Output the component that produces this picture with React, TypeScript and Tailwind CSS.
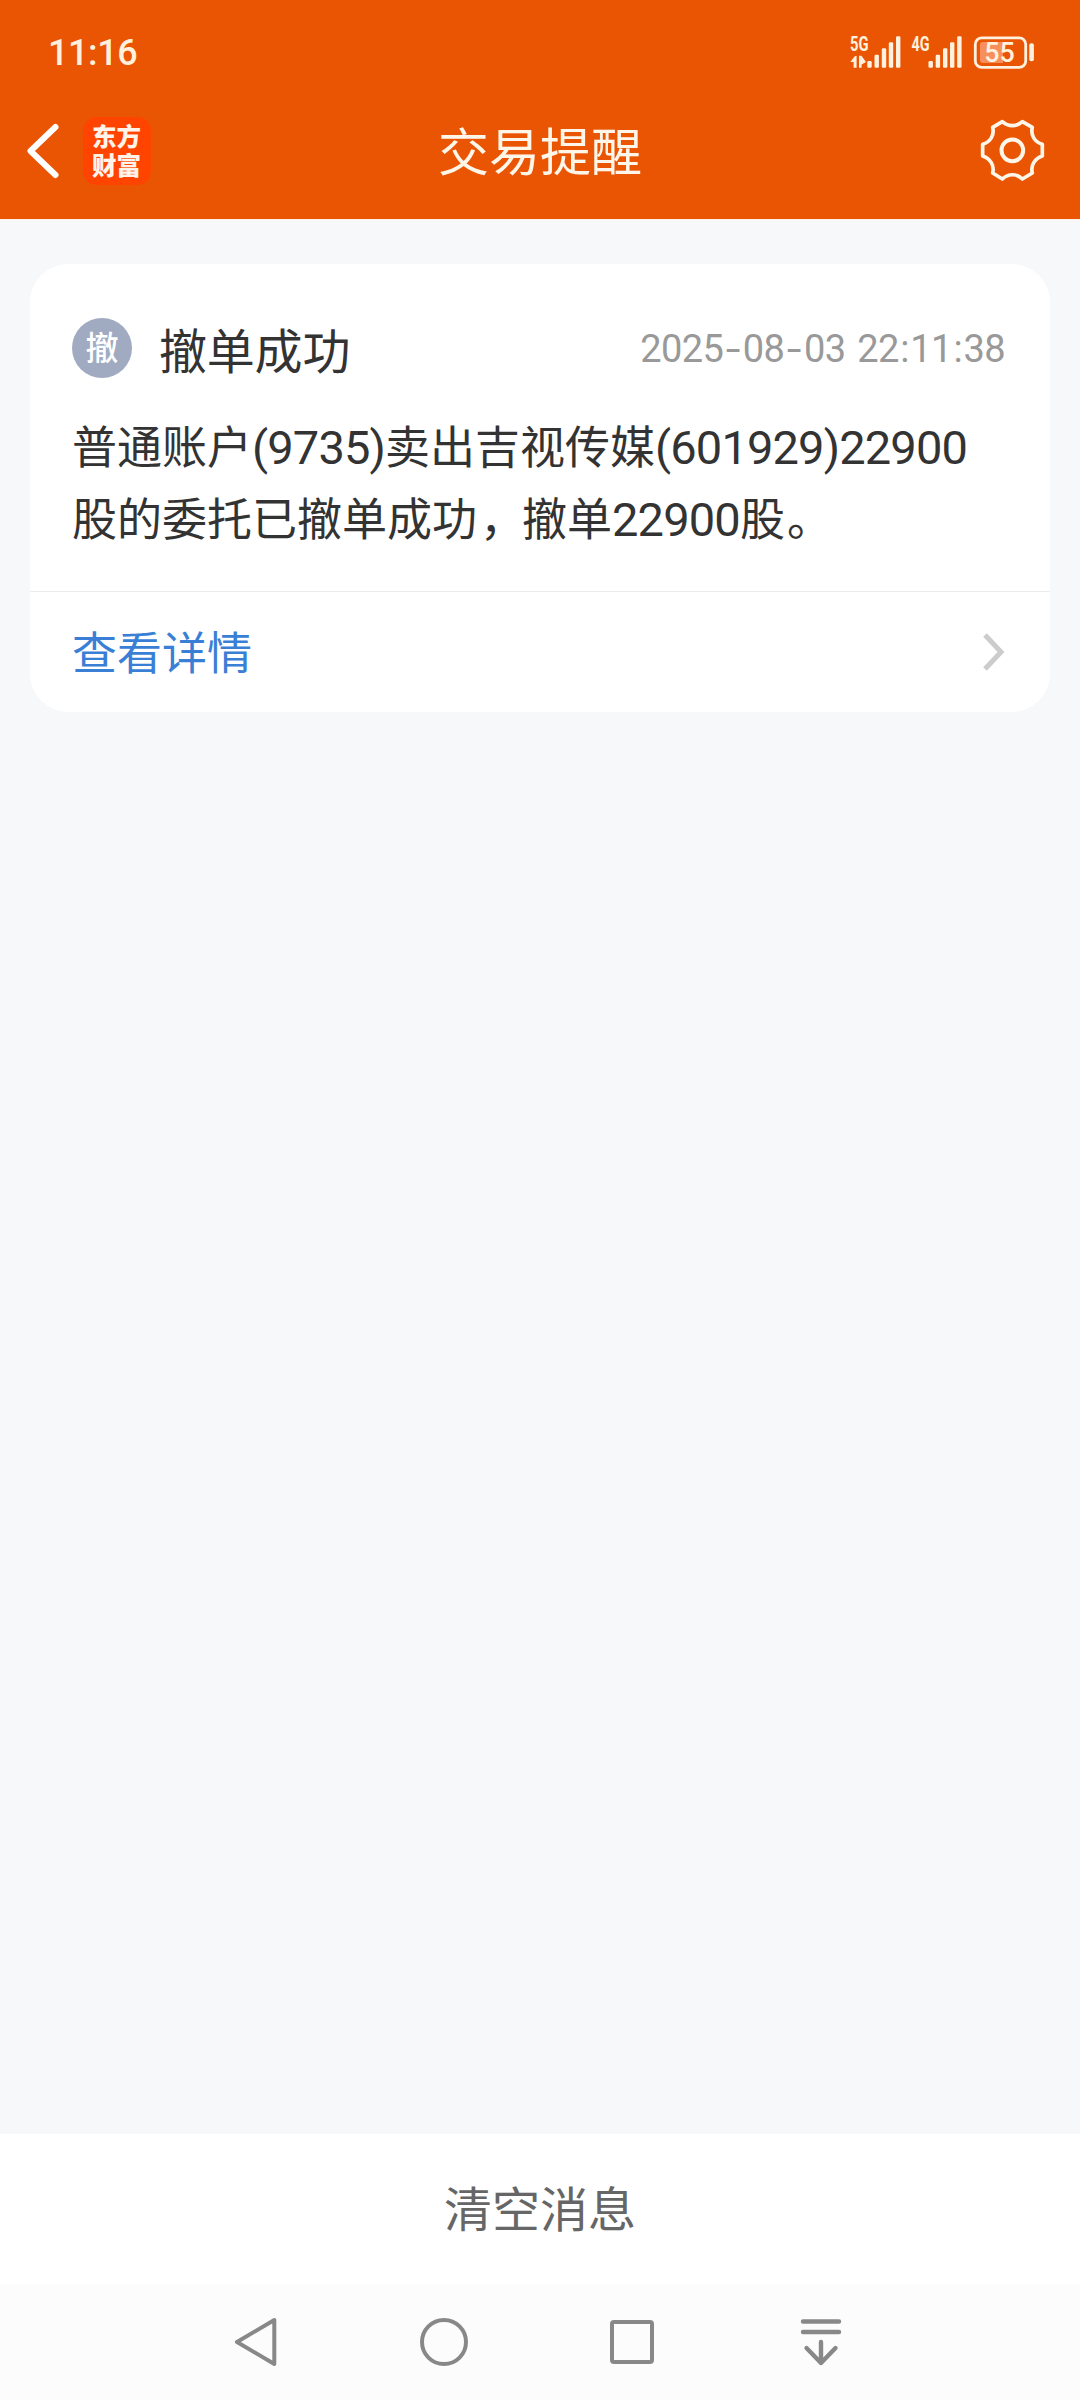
import type { ReactNode } from "react";

const CJK = "font-['Noto_Sans_CJK_SC',sans-serif]";

function Num({ children }: { children: ReactNode }) {
  return (
    <span className="font-['Roboto',sans-serif] text-[47px] leading-none tracking-[-0.85px]">{children}</span>
  );
}

function Dash() {
  return <span className="inline-block w-[19.6px] scale-x-140 text-center">-</span>;
}

function StatusIcons() {
  return (
    <svg className="overflow-visible" width="190" height="40" viewBox="848 32 190 40" fill="#fff1de">
      <g fontFamily="Roboto, sans-serif" fontWeight="700" fontSize="20">
        <text x="850" y="51" textLength="18.5" lengthAdjust="spacingAndGlyphs">5G</text>
        <text x="911.5" y="51" textLength="18" lengthAdjust="spacingAndGlyphs">4G</text>
      </g>
      <path d="M850.3 62 L855 56 H856.6 V67.7 H853.6 V62 Z" />
      <path d="M859 55.7 H861.4 L866 62 L861.6 64.5 V67.7 H859 Z" />
      {[0, 61.2].map((dx) => (
        <g key={dx} transform={`translate(${dx} 0)`}>
          <rect x="867.3" y="61" width="4.4" height="6.8" rx="1.2" />
          <rect x="874.5" y="54.8" width="4.4" height="13" rx="1.2" />
          <rect x="881.8" y="48.2" width="4.4" height="19.6" rx="1.2" />
          <rect x="888.8" y="42.2" width="4.4" height="25.6" rx="1.2" />
          <rect x="896" y="36.2" width="4.4" height="31.6" rx="1.2" />
        </g>
      ))}
      <rect x="975.3" y="37.8" width="50.4" height="29.6" rx="6.5" fill="none" stroke="#fff1de" strokeWidth="2.8" />
      <path d="M983 42 H1003 V63 H983 Q980 63 980 60 V45 Q980 42 983 42 Z" fill="#f68f5c" />
      <rect x="1029.3" y="43.3" width="4.6" height="18" rx="2" />
      <text x="984.3" y="62" fontFamily="Roboto, sans-serif" fontWeight="500" fontSize="27" textLength="30.5" lengthAdjust="spacingAndGlyphs">55</text>
    </svg>
  );
}

function Gear() {
  return (
    <svg width="65" height="64" viewBox="120 87 195 192" fill="none" stroke="#fff6ea" strokeWidth="11" strokeLinejoin="round">
      <path d="M187 95 C205 111 229 111 247 95 L277 112 C271 135 284 156 307 163 V198 C284 206 271 226 277 249 L247 267 C229 250 205 250 187 267 L158 249 C164 226 151 206 128 198 V163 C151 156 164 135 158 112 Z" />
      <circle cx="217" cy="181" r="32.5" strokeWidth="12" />
    </svg>
  );
}

export default function App() {
  return (
    <div className={`flex h-[2400px] w-[1080px] flex-col overflow-hidden bg-[#f6f8fa] ${CJK}`}>
      <header className="h-[220px] shrink-0 border-b border-[#fdf0e6] bg-[#ea5504]">
        <div className="flex h-[104px] items-center justify-between pl-[48px] pr-[42px]">
          <span className="pt-[2px] font-['Roboto',sans-serif] text-[36px] font-medium leading-none tracking-[-0.4px] text-[#fff1de]">11:16</span>
          <StatusIcons />
        </div>
        <div className="grid h-[94px] grid-cols-[1fr_auto_1fr] items-center">
          <div className="flex items-center">
            <svg className="ml-[24px]" width="40" height="60" viewBox="0 0 40 60" fill="none" stroke="#fff" strokeWidth="6" strokeLinecap="round" strokeLinejoin="round">
              <path d="M31.5 6 L6.5 30 L31.5 54" />
            </svg>
            <div className="ml-[19px] flex h-[68px] w-[68px] items-center justify-center rounded-[14px] bg-[#ff4400] pb-[2px] pr-[1px] text-center text-[24.5px] font-black leading-[29px] text-[#fff3ea]">
              东方
              <br />
              财富
            </div>
          </div>
          <h1 className="mb-[4px] text-[51px] font-normal leading-[60px] text-[#fff6ea]">交易提醒</h1>
          <div className="flex justify-end pr-[35px]">
            <Gear />
          </div>
        </div>
      </header>

      <main className="flex-1 px-[30px] pt-[44px]">
        <article className="h-[448px] rounded-[38px] bg-white">
          <div className="h-[328px] border-b-1 border-[#ebebeb] px-[42px] pt-[54px]">
            <div className="flex h-[60px] items-center">
              <span className="flex h-[60px] w-[60px] items-center justify-center rounded-full bg-[#a0abc2] pb-[3px] text-[33px] font-medium leading-none text-white">撤</span>
              <h2 className="ml-[27px] text-[48px] font-normal leading-[60px] tracking-[-0.2px] text-[#333]">撤单成功</h2>
              <time className="ml-auto mr-[3px] mt-[2px] whitespace-nowrap font-['Roboto',sans-serif] text-[38px] font-normal leading-none tracking-[-0.6px] text-[#999] [word-spacing:3px]">
                2025<Dash />08<Dash />03 22<span className="px-[1.5px]">:</span>11<span className="px-[1.5px]">:</span>38
              </time>
            </div>
            <p className="mt-[31px] whitespace-nowrap text-[45px] leading-[72px] text-[#333]">
              普通账户<Num>(9735)</Num>卖出吉视传媒<Num>(601929)22900</Num>
              <br />
              股的委托已撤单成功<span className="pl-[3px] tracking-[-3px]">，</span>撤单<Num>22900</Num>股<span className="pl-[2px]">。</span>
            </p>
          </div>
          <a className="flex h-[120px] items-center justify-between px-[42px] text-[45px] leading-none text-[#3a7fd6]">
            <span className="pb-[4px]">查看详情</span>
            <svg width="28" height="40" viewBox="0 0 28 40" fill="none" stroke="#ccc" strokeWidth="5">
              <path d="M5 3 L21 20 L5 37" />
            </svg>
          </a>
        </article>
      </main>

      <button className="flex h-[150px] shrink-0 items-center justify-center bg-white pb-[6px] text-[48px] leading-none text-[#666]">清空消息</button>

      <nav className="flex h-[116px] shrink-0 items-center justify-between bg-[#fcfcfc] pl-[231px] pr-[234px]">
        <svg width="50" height="54" viewBox="0 0 50 54" fill="none" stroke="#888" strokeWidth="4" strokeLinejoin="round">
          <path d="M43.3 5 V49 L6 27 Z" />
        </svg>
        <svg width="54" height="54" viewBox="0 0 54 54" fill="none" stroke="#888" strokeWidth="4">
          <circle cx="27" cy="27" r="22" />
        </svg>
        <svg width="54" height="54" viewBox="0 0 54 54" fill="none" stroke="#888" strokeWidth="4">
          <rect x="6" y="7" width="40" height="40" rx="2" />
        </svg>
        <svg width="50" height="54" viewBox="0 0 50 54" fill="none" stroke="#888" strokeWidth="4.4" strokeLinecap="round" strokeLinejoin="round">
          <path d="M7 6.5 H43 M7 17 H43 M25 27 V48 M10.5 33 L25 48 L39.5 33" />
        </svg>
      </nav>
    </div>
  );
}
